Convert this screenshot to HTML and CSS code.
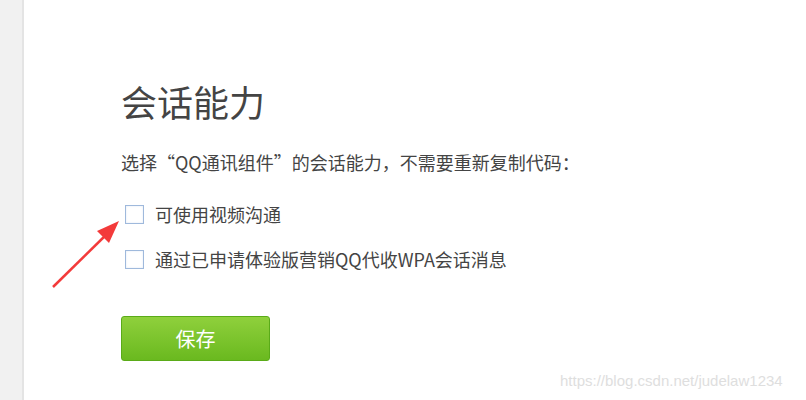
FILE: index.html
```html
<!DOCTYPE html>
<html lang="zh-CN">
<head>
    <meta charset="UTF-8">
    <title>会话能力</title>
    <link rel="stylesheet" href="styles.css">
</head>
<body>
<div class="page">
    <div class="side"></div>
    <div class="main">
        <h1 class="title">会话能力</h1>
        <p class="desc">选择“QQ通讯组件”的会话能力，不需要重新复制代码：</p>
        <label class="option"><span class="box"></span>可使用视频沟通</label>
        <label class="option"><span class="box"></span>通过已申请体验版营销QQ代收WPA会话消息</label>
        <button class="save">保存</button>
    </div>
</div>
<svg class="arrow" width="80" height="80" viewBox="0 0 80 80">
    <line x1="2" y1="76" x2="58" y2="21" stroke="#f33a3a" stroke-width="2.5"/>
    <polygon points="68,10 46,20 58,32" fill="#f33a3a"/>
</svg>
<div class="mark">https://blog.csdn.net/judelaw1234</div>
</body>
</html>
```

FILE: styles.css
```css
body {
    margin: 0;
    font-family: "Noto Sans CJK SC", "Liberation Sans", sans-serif;
    background-color: #fff;
}

.page {
    display: flex;
    height: 400px;
}

.side {
    width: 22px;
    background-color: #f1f1f1;
    border-right: 2px solid #e4e4e4;
}

.main {
    padding: 75px 0 0 97px;
    color: #444;
}

.title {
    margin: 0;
    font-size: 36px;
    font-weight: normal;
    line-height: 52px;
    color: #444;
}

.desc {
    margin: 23px 0 28px;
    font-size: 18px;
    line-height: 24px;
}

.option {
    display: flex;
    align-items: center;
    margin: 0 0 21px 4px;
    font-size: 18px;
    line-height: 24px;
}

.box {
    width: 17px;
    height: 17px;
    border: 1px solid #9fb9dc;
    background-color: #fff;
    margin-right: 11px;
    box-shadow: inset 0 0 2px #dbe5f2;
}

.save {
    margin-top: 24px;
    width: 149px;
    height: 45px;
    border: 1px solid #5aab18;
    border-radius: 3px;
    background: linear-gradient(#8fd03c, #6ab91f);
    color: #fff;
    font-family: "Noto Sans CJK SC", sans-serif;
    font-size: 20px;
}

.arrow {
    position: absolute;
    left: 51px;
    top: 211px;
}

.mark {
    position: absolute;
    left: 560px;
    top: 372px;
    font-family: "Liberation Sans", sans-serif;
    font-size: 15px;
    color: #dedede;
}
```
